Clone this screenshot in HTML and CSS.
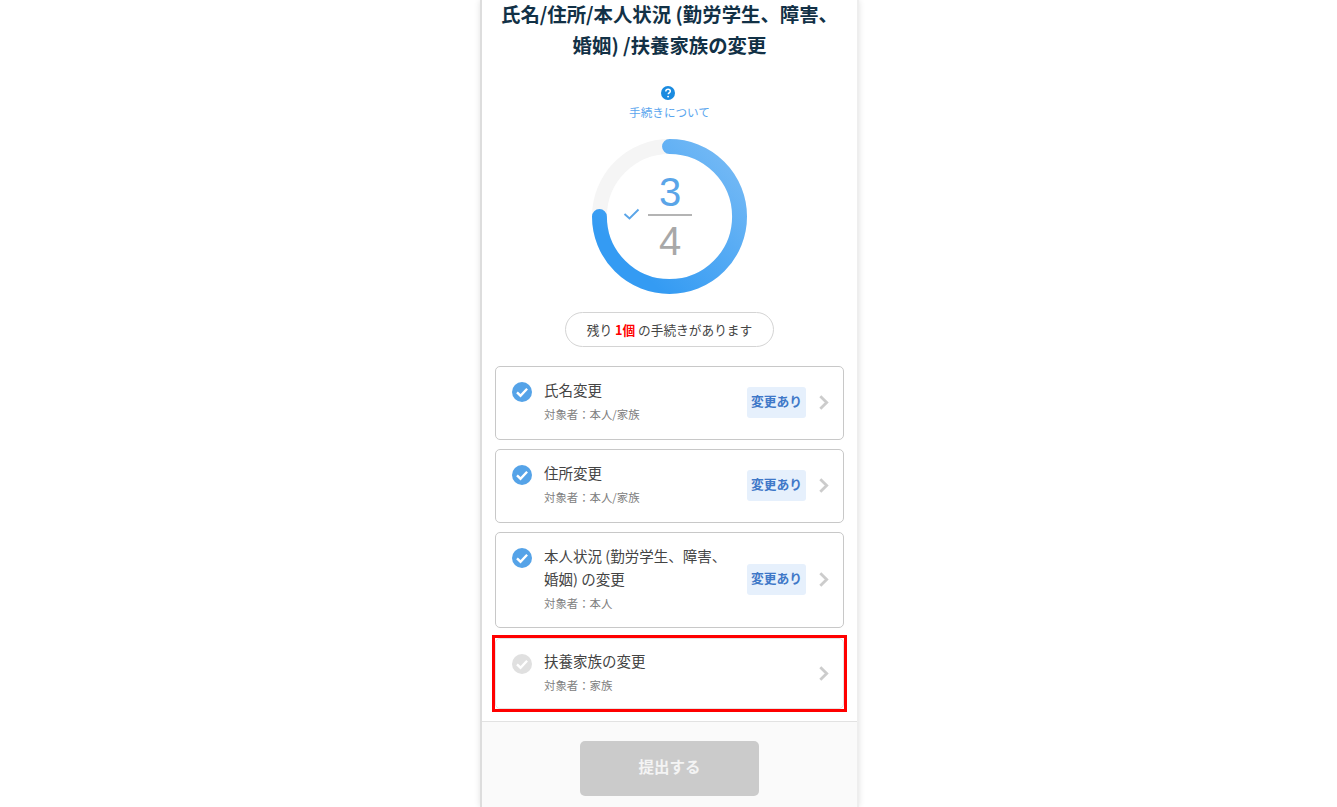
FILE: index.html
```html
<!DOCTYPE html>
<html lang="ja">
<head>
<meta charset="utf-8">
<title>手続き</title>
<link rel="stylesheet" href="styles.css">
</head>
<body>
<main class="panel">
  <div class="content">
    <h1 class="title">氏名/住所/本人状況 (勤労学生、障害、<br>婚姻) /扶養家族の変更</h1>
    <a class="help">
      <svg class="help-icon" viewBox="0 0 14 14"><circle cx="7" cy="7" r="7" fill="#1a8be0"/><path d="M4.8 5.4c0-1.3 1-2.2 2.3-2.2s2.2.8 2.2 2c0 1-.6 1.4-1.2 1.8-.5.3-.8.6-.8 1.2" fill="none" stroke="#fff" stroke-width="1.5"/><circle cx="7.1" cy="10.6" r=".95" fill="#fff"/></svg>
      <span>手続きについて</span>
    </a>
    <div class="progress">
      <svg class="ring" viewBox="0 0 156 156">
        <defs>
          <linearGradient id="arc" x1="1" y1="0" x2="0" y2="1">
            <stop offset="0" stop-color="#7abcf5"/>
            <stop offset="0.8" stop-color="#349bf3"/>
          </linearGradient>
        </defs>
        <circle cx="78" cy="78" r="70.5" fill="none" stroke="#f5f5f5" stroke-width="15"/>
        <path d="M78 7.5A70.5 70.5 0 1 1 7.5 78" fill="none" stroke="url(#arc)" stroke-width="15" stroke-linecap="round"/>
      </svg>
      <svg class="ring-check" viewBox="0 0 16 12"><path d="M1 6l5 4.500L15 1.500" fill="none" stroke="#5aa5e8" stroke-width="1.900"/></svg>
      <div class="fraction">
        <span class="done">3</span>
        <span class="total">4</span>
      </div>
    </div>
    <p class="remain">残り <b>1個</b> の手続きがあります</p>
    <ul class="list">
      <li class="card">
        <svg class="check" viewBox="0 0 20 20"><circle cx="10" cy="10" r="10" fill="#55a3e8"/><path d="M5 10.300l3.500 3.400 6.600-7" fill="none" stroke="#fff" stroke-width="2.400"/></svg>
        <div class="body"><div class="name">氏名変更</div><div class="who">対象者：本人/家族</div></div>
        <span class="badge">変更あり</span>
        <svg class="chev" viewBox="0 0 10 15"><path d="M1.300 1.200L7.700 7.500l-6.400 6.300" fill="none" stroke="#ccc" stroke-width="2.800"/></svg>
      </li>
      <li class="card">
        <svg class="check" viewBox="0 0 20 20"><circle cx="10" cy="10" r="10" fill="#55a3e8"/><path d="M5 10.300l3.500 3.400 6.600-7" fill="none" stroke="#fff" stroke-width="2.400"/></svg>
        <div class="body"><div class="name">住所変更</div><div class="who">対象者：本人/家族</div></div>
        <span class="badge">変更あり</span>
        <svg class="chev" viewBox="0 0 10 15"><path d="M1.300 1.200L7.700 7.500l-6.400 6.300" fill="none" stroke="#ccc" stroke-width="2.800"/></svg>
      </li>
      <li class="card">
        <svg class="check" viewBox="0 0 20 20"><circle cx="10" cy="10" r="10" fill="#55a3e8"/><path d="M5 10.300l3.500 3.400 6.600-7" fill="none" stroke="#fff" stroke-width="2.400"/></svg>
        <div class="body"><div class="name">本人状況 (勤労学生、障害、<br>婚姻) の変更</div><div class="who">対象者：本人</div></div>
        <span class="badge">変更あり</span>
        <svg class="chev" viewBox="0 0 10 15"><path d="M1.300 1.200L7.700 7.500l-6.400 6.300" fill="none" stroke="#ccc" stroke-width="2.800"/></svg>
      </li>
      <li class="card card-active">
        <svg class="check" viewBox="0 0 20 20"><circle cx="10" cy="10" r="10" fill="#e0e0e0"/><path d="M5 10.300l3.500 3.400 6.600-7" fill="none" stroke="#fff" stroke-width="2.400"/></svg>
        <div class="body"><div class="name">扶養家族の変更</div><div class="who">対象者：家族</div></div>
        <svg class="chev" viewBox="0 0 10 15"><path d="M1.300 1.200L7.700 7.500l-6.400 6.300" fill="none" stroke="#ccc" stroke-width="2.800"/></svg>
      </li>
    </ul>
  </div>
  <footer class="footer">
    <button class="submit" type="button">提出する</button>
  </footer>
</main>
</body>
</html>
```
FILE: styles.css
```css
* { box-sizing: border-box; }
html, body { margin: 0; height: 100%; overflow: hidden; background: #fff; }
body {
  font-family: "Noto Sans CJK JP", "Liberation Sans", sans-serif;
  color: #333;
}
.panel {
  width: 379px;
  height: 807px;
  margin-left: 480px;
  border-left: 2px solid #ddd;
  border-right: 2px solid #eee;
  box-shadow: 0 0 6px rgba(0, 0, 0, .12);
  display: flex;
  flex-direction: column;
  background: #fff;
}
.content {
  flex: 1;
  padding: 0 13px;
  display: flex;
  flex-direction: column;
  align-items: center;
}
.title {
  margin: -2px 0 0;
  font-size: 19.400px;
  line-height: 31px;
  font-weight: 700;
  color: #123146;
  text-align: center;
  white-space: nowrap;
}
.help {
  margin-top: 26px;
  display: flex;
  flex-direction: column;
  align-items: center;
  gap: 4px;
  font-size: 11.600px;
  line-height: 16px;
  color: #5aa5ee;
}
.help-icon { width: 14px; height: 14px; display: block; margin-right: 4px; }
.progress {
  position: relative;
  margin-top: 19px;
  width: 155px;
  height: 155px;
}
.ring { width: 155px; height: 155px; display: block; }
.ring-check {
  position: absolute;
  left: 31px;
  top: 69px;
  width: 17px;
  height: 12px;
}
.fraction {
  position: absolute;
  left: 56px;
  top: 31px;
  width: 44px;
  display: flex;
  flex-direction: column;
  align-items: center;
  font-family: "Liberation Sans", sans-serif;
  font-size: 40px;
  line-height: 45px;
}
.done { color: #5aa5e8; height: 46px; width: 100%; text-align: center; border-bottom: 2px solid #b4b4b4; }
.total { color: #a8a8a8; margin-top: 3px; }
.remain {
  margin: 18px 0 0;
  width: 209px;
  height: 35px;
  border: 1px solid #d4d4d4;
  border-radius: 18px;
  font-size: 12.700px;
  line-height: 33px;
  text-align: center;
  color: #444;
}
.remain b { color: #f00; font-weight: 700; }
.list {
  list-style: none;
  margin: 19px 0 0;
  padding: 0;
  width: 349px;
  display: flex;
  flex-direction: column;
  gap: 9.500px;
}
.card {
  position: relative;
  display: flex;
  align-items: center;
  padding: 14px 14px 16.500px 16px;
  border: 1px solid #c8c8c8;
  border-radius: 5px;
  background: #fff;
}
.card-active {
  border-color: #e4e4e4;
  padding-top: 13px;
  padding-bottom: 15px;
}
.card-active::after {
  content: "";
  position: absolute;
  inset: -4px;
  border: 3px solid #f00;
  pointer-events: none;
}
.check { width: 20px; height: 20px; flex: none; align-self: flex-start; margin-top: 1px; }
.card-active .check { margin-top: 2px; }
.body { flex: 1; margin-left: 12px; min-width: 0; }
.name { font-size: 14.500px; line-height: 22.500px; color: #444; margin-top: -2px; }
.who { font-size: 11.400px; line-height: 16px; color: #808080; margin-top: 4.500px; }
.badge {
  flex: none;
  width: 59px;
  height: 31px;
  margin-top: 2px;
  border-radius: 3px;
  background: #e6f0fc;
  color: #3f78c8;
  font-size: 12.800px;
  font-weight: 700;
  line-height: 27px;
  text-align: center;
}
.chev { flex: none; width: 10px; height: 15px; margin-left: 13px; margin-top: 2px; }
.footer {
  height: 86px;
  margin-top: auto;
  border-top: 1px solid #e2e2e2;
  background: #fafafa;
  padding-top: 19px;
  display: flex;
  justify-content: center;
  align-items: flex-start;
}
.submit {
  width: 179px;
  height: 55px;
  border: 0;
  border-radius: 5px;
  background: #cbcbcb;
  color: #f4f4f4;
  font: 700 15.500px/51px "Noto Sans CJK JP", sans-serif;
  padding: 0 0 4px;
}
```
